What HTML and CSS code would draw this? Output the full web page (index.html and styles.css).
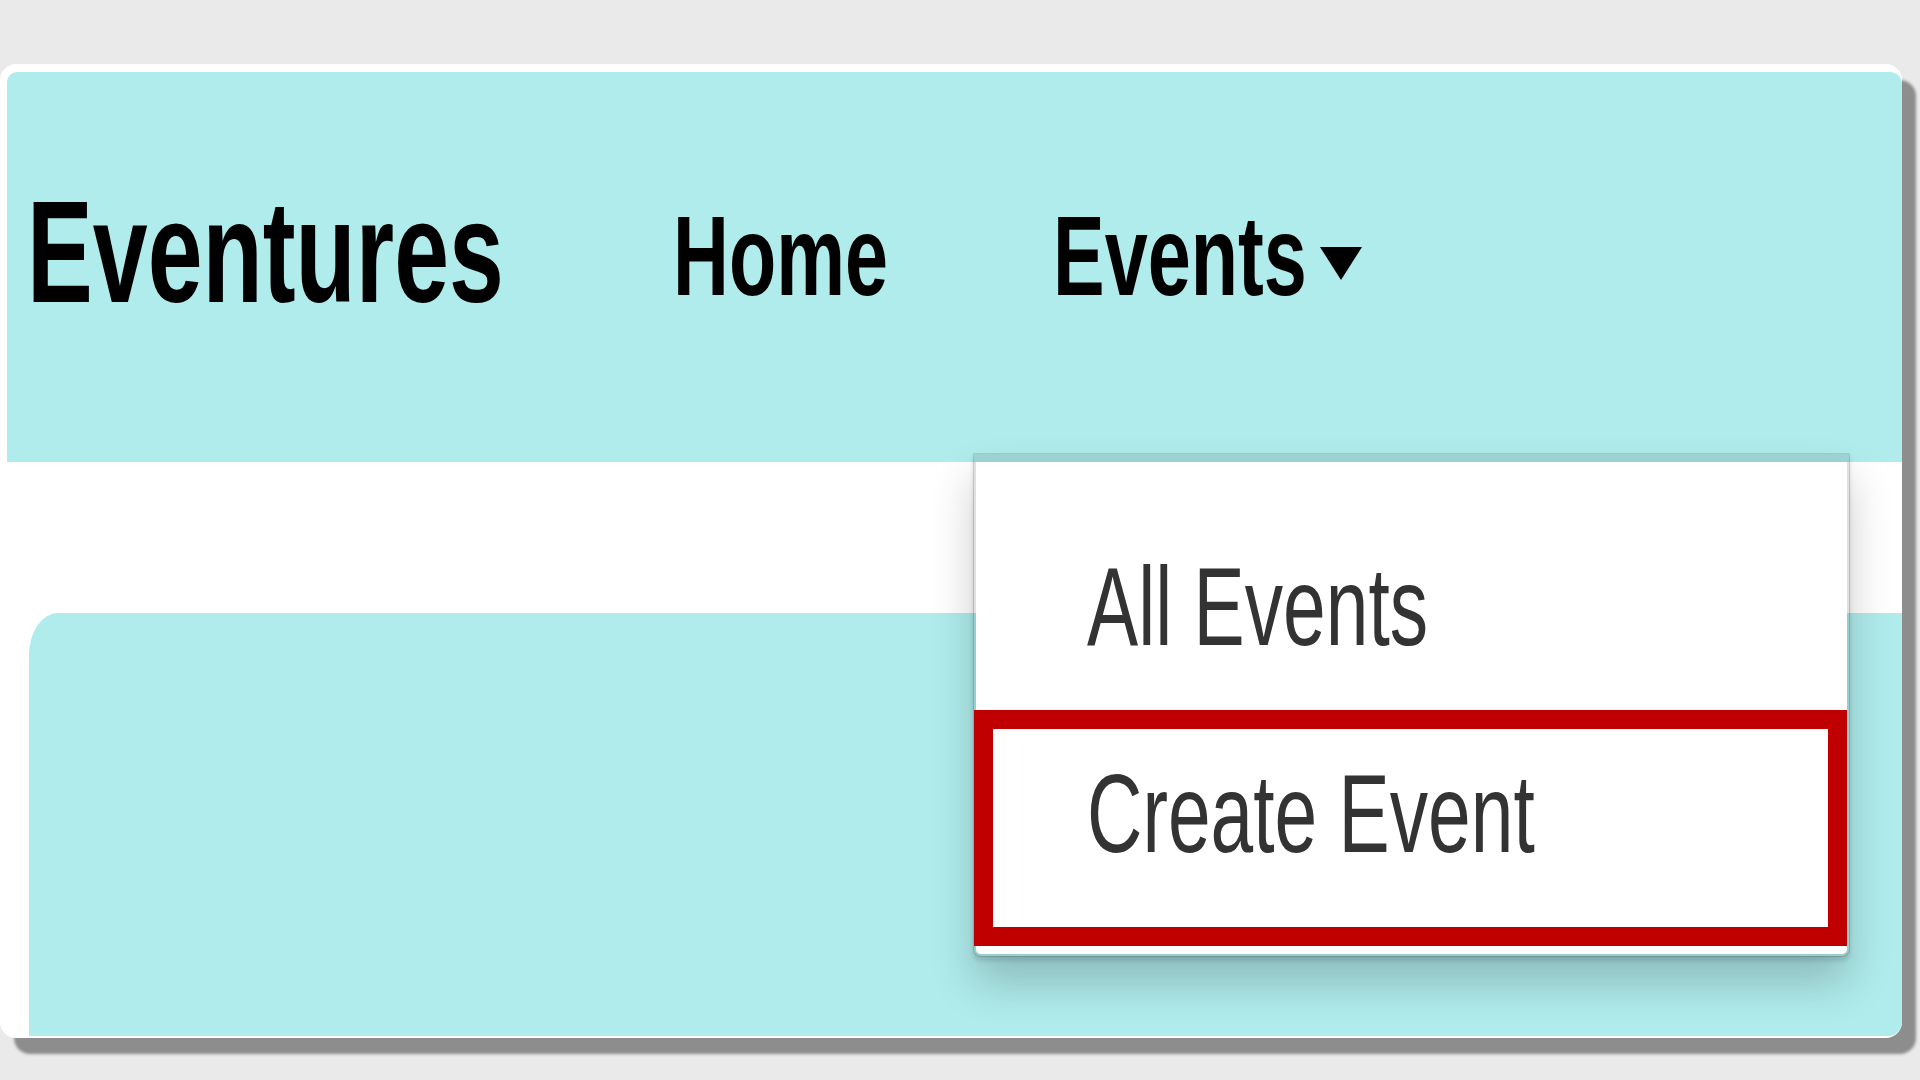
FILE: index.html
```html
<!DOCTYPE html>
<html lang="en">
<head>
<meta charset="utf-8">
<title>Eventures</title>
<link rel="stylesheet" href="styles.css">
</head>
<body>
<div class="frame">
  <nav class="navbar">
    <a class="brand"><span class="sx">Eventures</span></a>
    <a class="nav-link home"><span class="sx">Home</span></a>
    <a class="nav-link events"><span class="sx">Events</span></a>
    <span class="caret"></span>
  </nav>
  <div class="card"></div>
  <div class="dropdown">
    <a class="item item-all"><span class="sx">All Events</span></a>
    <a class="item item-create"><span class="sx">Create Event</span><span class="highlight"></span></a>
  </div>
</div>
</body>
</html>
```

FILE: styles.css
```css
html, body {
  margin: 0;
  padding: 0;
}
body {
  background: #eaeaea;
  width: 1920px;
  height: 1080px;
  overflow: hidden;
  font-family: "Liberation Sans", Arial, sans-serif;
}
.frame {
  position: relative;
  margin-top: 64px;
  width: 1902px;
  height: 974px;
  box-sizing: border-box;
  padding: 8px 0 2px 7px;
  background: #ffffff;
  border-radius: 16px;
  box-shadow: 14px 16px 3px #8d8d8d;
}
.sx {
  display: inline-block;
  white-space: nowrap;
  transform: scaleX(0.685);
  transform-origin: 0 0;
  line-height: 1;
  vertical-align: top;
}
.navbar {
  display: flex;
  align-items: flex-start;
  height: 390px;
  padding-left: 20px;
  background: #b0ecec;
  border-radius: 10px 12px 0 0;
}
.brand {
  flex: none;
  width: 477px;
  margin-top: 109px;
  font-size: 144px;
  line-height: 1;
  font-weight: 700;
  color: #000;
}
.nav-link {
  flex: none;
  margin-top: 128px;
  font-size: 113px;
  line-height: 1;
  font-weight: 700;
  color: #000;
}
.home {
  width: 215px;
  margin-left: 169px;
}
.events {
  width: 254px;
  margin-left: 165px;
}
.caret {
  flex: none;
  width: 0;
  height: 0;
  margin-left: 13px;
  margin-top: 175px;
  border-top: 33px solid #000;
  border-left: 21px solid transparent;
  border-right: 21px solid transparent;
}
.card {
  margin-top: 151px;
  margin-left: 22px;
  height: 423px;
  background: #b0ecec;
  border-radius: 29px 0 14px 0 / 42px 0 14px 0;
}
.dropdown {
  position: absolute;
  left: 973px;
  top: 389px;
  width: 877px;
  height: 504px;
  box-sizing: border-box;
  background: #ffffff;
  border: 3px solid rgba(0, 0, 0, 0.12);
  border-top: 9px solid rgba(0, 0, 0, 0.11);
  border-radius: 0 0 8px 8px;
  background-clip: padding-box;
  box-shadow: 0 4px 4px rgba(0, 0, 0, 0.12), 0 26px 44px rgba(0, 0, 0, 0.2);
}
.item {
  position: relative;
  display: block;
  padding-left: 111px;
  font-size: 112px;
  line-height: 1;
  color: #333333;
}
.item-all {
  height: 248px;
  padding-top: 89px;
  box-sizing: border-box;
}
.item-create {
  height: 236px;
  padding-top: 48px;
  box-sizing: border-box;
}
.highlight {
  position: absolute;
  left: -2px;
  right: 0;
  top: 0;
  bottom: 0;
  border: 19px solid #c00000;
}
```
